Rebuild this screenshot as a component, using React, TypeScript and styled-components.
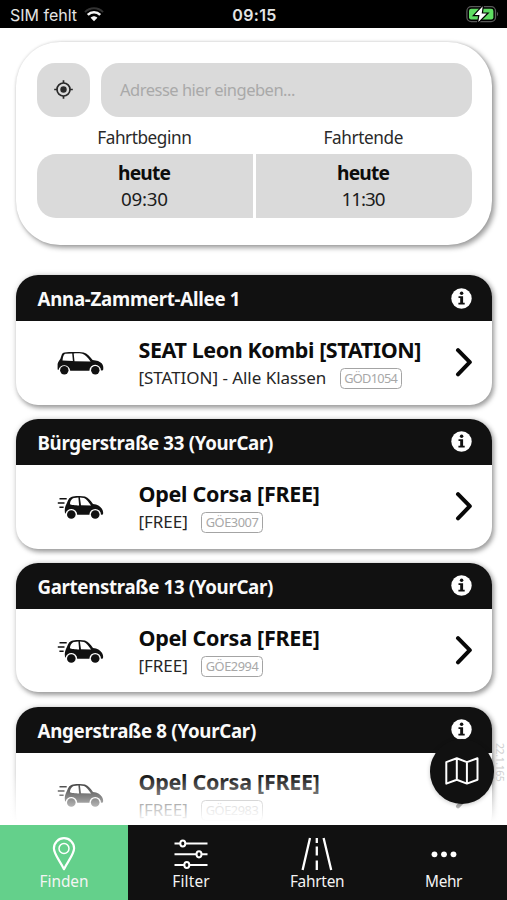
import React from "react";
import styled, { createGlobalStyle } from "styled-components";

const Global = createGlobalStyle`
  * { box-sizing: border-box; }
  html, body { margin: 0; padding: 0; background: #fff; }
  body { font-family: "Noto Sans", "Open Sans", sans-serif; color: #0c0c0c; overflow: hidden; }
  button { font: inherit; color: inherit; border: 0; padding: 0; background: none; }
  svg { display: block; flex: none; }
`;

const Screen = styled.div`
  position: relative;
  width: 507px;
  height: 900px;
  display: flex;
  flex-direction: column;
  overflow: hidden;
  background: #fff;
`;

const StatusBar = styled.header`
  flex: none;
  height: 28px;
  display: grid;
  grid-template-columns: 1fr auto 1fr;
  align-items: center;
  padding: 1px 8px 0 10px;
  background: #000;
  color: #e4e4e4;
  font: 400 16px/26px Inter, sans-serif;
`;
const Carrier = styled.div`
  display: flex;
  align-items: center;
  gap: 7px;
`;
const Clock = styled.div`
  font-weight: 600;
  letter-spacing: 0.35px;
`;
const Power = styled.div`
  display: flex;
  justify-content: flex-end;
`;

const Content = styled.main`
  flex: 1;
  min-height: 0;
  overflow: hidden;
  padding: 14px 15px 0 16px;
`;

const Fit = styled.span<{ $ls?: number }>`
  letter-spacing: ${(p) => p.$ls ?? 0}px;
  margin-right: ${(p) => -(p.$ls ?? 0)}px;
  white-space: nowrap;
`;

const SearchPanel = styled.section`
  height: 203px;
  padding: 21px 20.5px 0;
  border-radius: 44px;
  background: #fff;
  box-shadow: 2.5px 2.5px 5px rgba(0, 0, 0, 0.36), 0 0 3px rgba(0, 0, 0, 0.12);
`;
const AddressRow = styled.div`
  display: flex;
  gap: 11px;
`;
const LocateButton = styled.button`
  width: 53.5px;
  height: 53.5px;
  display: grid;
  place-items: center;
  border-radius: 18px;
  background: #dadada;
`;
const AddressField = styled.div`
  flex: 1;
  height: 53.5px;
  padding-left: 19px;
  border-radius: 18px;
  background: #dadada;
  color: #a9a9a9;
  font-size: 16.5px;
  line-height: 54px;
`;
const Period = styled.div`
  display: grid;
  grid-template-columns: 1fr 1fr;
  column-gap: 3px;
`;
const PeriodLabel = styled.div`
  height: 37px;
  text-align: center;
  font-size: 17.2px;
  line-height: 41px;
  color: #2a2a2a;
`;
const PeriodButton = styled.button<{ $side: "left" | "right" }>`
  height: 64px;
  padding-top: 6px;
  display: flex;
  flex-direction: column;
  align-items: center;
  background: #dadada;
  border-radius: ${(p) => (p.$side === "left" ? "19px 0 0 19px" : "0 19px 19px 0")};
`;
const Day = styled.strong`
  font-size: 19.2px;
  line-height: 26px;
`;
const Time = styled.span`
  font-size: 18.8px;
  line-height: 26px;
  color: #1c1c1c;
`;

const Stations = styled.div`
  margin-top: 30.3px;
  display: flex;
  flex-direction: column;
  gap: 14.5px;
`;
const Card = styled.article`
  flex: none;
  height: 129.4px;
  border-radius: 22px;
  background: #fff;
  box-shadow: 2px 2.5px 5px rgba(0, 0, 0, 0.36), 0 0 6px rgba(0, 0, 0, 0.12);
`;
const CardHead = styled.header`
  height: 45.6px;
  padding: 0 20.5px 0 21.5px;
  display: flex;
  align-items: center;
  justify-content: space-between;
  border-radius: 22px 22px 0 0;
  background: #111;
  color: #fafafa;
  font-size: 18.7px;
  font-weight: 700;
  line-height: 46px;
`;
const Name = styled.span`
  padding-top: 2px;
`;
const CardBody = styled.div`
  height: 83.8px;
  display: grid;
  grid-template-columns: 122.5px 1fr 37.5px;
`;
const CarSlot = styled.div`
  padding: 28px 0 0 40px;
`;
const Vehicle = styled.div`
  padding-top: 14.2px;
`;
const Model = styled.h2`
  margin: 0;
  font-size: 21.5px;
  line-height: 30px;
  font-weight: 700;
`;
const Detail = styled.div`
  display: flex;
  align-items: center;
  gap: 13.5px;
  height: 25px;
  font-size: 17px;
  line-height: 25px;
  color: #262626;
`;
const Plate = styled.span`
  height: 20.5px;
  margin-top: 2px;
  padding: 0 3.5px;
  border: 1.6px solid #a4a4a4;
  border-radius: 4.5px;
  color: #a8a8a8;
  font-size: 12.8px;
  line-height: 18px;
`;
const ArrowSlot = styled.div`
  padding-top: 26.5px;
`;

const Fade = styled.div`
  position: absolute;
  left: 0;
  right: 0;
  bottom: 75.5px;
  height: 52px;
  background: linear-gradient(rgba(255, 255, 255, 0), #fff 94%);
`;
const MapButton = styled.button`
  position: absolute;
  left: 429.5px;
  top: 739px;
  width: 64.5px;
  height: 65px;
  padding-bottom: 2px;
  display: grid;
  place-items: center;
  border-radius: 50%;
  background: #111;
  box-shadow: 0 1px 4px rgba(0, 0, 0, 0.22);
`;
const Version = styled.div`
  position: absolute;
  left: 493px;
  top: 743px;
  writing-mode: vertical-rl;
  font-size: 10.5px;
  line-height: 14px;
  letter-spacing: -0.4px;
  color: #cfcfcf;
`;

const TabBar = styled.nav`
  flex: none;
  height: 75.5px;
  display: grid;
  grid-template-columns: 128px 126px 126.5px 126.5px;
  background: #111;
  color: #f4f4f4;
`;
const Tab = styled.a<{ $active?: boolean }>`
  display: flex;
  flex-direction: column;
  align-items: center;
  padding-top: 12px;
  background: ${(p) => (p.$active ? "#64d08b" : "transparent")};
  font-size: 15.4px;
  line-height: 22px;
`;
const TabIcon = styled.span`
  height: 34px;
`;

const Wifi = () => (
  <svg width="20" height="15" viewBox="0 0 20 15" fill="none">
    <path d="M1 5.1C6-.1 14-.1 19 5.1" stroke="#333" strokeWidth="2" />
    <path d="M3.8 7.9c3.5-3.6 8.9-3.6 12.4 0" stroke="#f5f5f5" strokeWidth="2.6" />
    <path d="M6.6 10.8c2-2 4.8-2 6.8 0L10 14.3z" fill="#f5f5f5" />
  </svg>
);
const Battery = () => (
  <svg width="33" height="19" viewBox="0 0 33 19">
    <rect x=".9" y="1.6" width="28.6" height="15" rx="4.4" fill="#000" stroke="#5a5a5a" strokeWidth="1.3" />
    <rect x="3" y="3.7" width="24.4" height="10.8" rx="2.2" fill="#5fdc62" />
    <path d="M31 7c1.5.6 1.5 3.6 0 4.2z" fill="#5a5a5a" />
    <path d="M16.700 1.300 8.700 10h4.800l-1.200 6.900L20.700 8.600h-5z" fill="#fff" stroke="#000" strokeWidth="2.400" paintOrder="stroke" />
  </svg>
);
const Locate = () => (
  <svg width="19" height="19" viewBox="0 0 19 19" fill="none" stroke="#292929">
    <circle cx="9.5" cy="9.5" r="6.5" strokeWidth="1.7" />
    <circle cx="9.5" cy="9.5" r="3.2" fill="#292929" stroke="none" />
    <path d="M9.5.2v2.9M9.5 15.9v2.9M.2 9.5h2.9M15.900 9.500h2.900" strokeWidth="1.700" />
  </svg>
);
const Info = () => (
  <svg width="21" height="21" viewBox="0 0 21 21">
    <circle cx="10.500" cy="10.500" r="10.200" fill="#fff" />
    <circle cx="10.600" cy="5.200" r="1.750" fill="#111" />
    <path d="M7.500 8.200h4.600v6.600h1.600v1.700H7.400v-1.700H9.200V9.900H7.500z" fill="#111" />
  </svg>
);
const Arrow = () => (
  <svg width="19" height="30" viewBox="0 0 19 30" fill="none">
    <path d="m3 3.200 11.800 12L3 27.300" stroke="#080808" strokeWidth="4" strokeLinecap="round" strokeLinejoin="round" />
  </svg>
);
const StationCar = () => (
  <svg width="50" height="26" viewBox="0 0 50 26">
    <path
      fill="#111"
      fillRule="evenodd"
      d="M1.600 20.500V15C2 12.800 3.400 11.500 4.300 10L5.800 5.600C6.400 4.200 7.200 3.600 8.600 3.500 14 3 22 2.900 27.600 3.600c3.600.9 6.200 4.300 9 7.300 4 .4 7.500 1.300 9.300 3.700 1.300 1.800 1.800 4.200 1.200 6.600L45 21.500a5.800 5.800 0 0 0-11.600.2H14.200a5.900 5.900 0 0 0-11.700-.6zM9.300 4.800C7.600 5.200 6.900 8.200 6.500 11.400L16.900 12.100 16.200 4.400zM17.700 4.400 18.500 12.200 34.600 12.400C32 8.600 29 5.300 26.400 4.700 23.800 4.300 20.600 4.300 17.700 4.400z"
    />
    <circle cx="8.300" cy="21.200" r="4.200" fill="#111" />
    <circle cx="39.300" cy="21.200" r="4.200" fill="#111" />
  </svg>
);
const FreeCar = () => (
  <svg width="50" height="26" viewBox="0 0 50 26">
    <path d="M3.500 5.700h7.200M1.800 10.100h6.700M3.400 14.200h4.200" stroke="#111" strokeWidth="1.500" />
    <path
      fill="#111"
      fillRule="evenodd"
      d="M9 20c-.8-4.500.6-7.500 2-10.300 1.500-4 2.800-5.800 6-6.300C22 2.800 26 2.800 29 3.600c3.500 1.200 5.500 4.300 8 7.300 4.500.6 7 2 8.900 4.900 1.200 2 1.600 3.900 1 5.800L45 21.700a5.800 5.800 0 0 0-11.600 0H21.200a5.900 5.900 0 0 0-11.700-.9zM18 4.900c-2.600.6-4.200 4.100-3.900 6.300.8.800 5.400 1.100 9 1.200L22.400 4.400zM23.900 4.400 25 12.300 35 12.600C32.700 8.800 30.200 5.700 28 4.900z"
    />
    <circle cx="15.300" cy="21.500" r="4.300" fill="#111" />
    <circle cx="39.200" cy="21.500" r="4.300" fill="#111" />
  </svg>
);
const MapIcon = () => (
  <svg width="34" height="28" viewBox="0 0 34 28" fill="none" stroke="#fff" strokeWidth="2" strokeLinejoin="round">
    <path d="M1.300 5.100 11.800 1.300l10.100 3.800 10.600-3.800v21.500l-10.600 3.800-10.100-3.800-10.500 3.800zM11.800 1.300v21.500M21.900 5.100v21.500" />
  </svg>
);
const Pin = () => (
  <svg width="24" height="34" viewBox="0 0 24 34" fill="none" stroke="#fff">
    <path d="M12 32.200C8 24 1.900 17.200 1.900 11.300a10.100 10.100 0 0 1 20.200 0C22.100 17.200 16 24 12 32.200z" strokeWidth="2.200" strokeLinejoin="round" />
    <circle cx="12" cy="11.500" r="5" strokeWidth="1.500" />
  </svg>
);
const Sliders = () => (
  <svg width="34" height="34" viewBox="0 0 34 34" fill="#111" stroke="#fff" strokeWidth="2">
    <path d="M.5 6.500h33M.5 17.300h33M.5 28h33" />
    <ellipse cx="8.800" cy="6.500" rx="2.500" ry="3.100" />
    <ellipse cx="25" cy="17.300" rx="2.500" ry="3.100" />
    <ellipse cx="12.800" cy="28" rx="2.500" ry="3.100" />
  </svg>
);
const Road = () => (
  <svg width="32" height="34" viewBox="0 0 32 34" fill="none" stroke="#fff" strokeWidth="2.300">
    <path d="M9 1 1.600 33M22.600 1 30.200 33M15.800 1v5M15.800 9.500v9M15.800 23.500v9.500" />
  </svg>
);
const Dots = () => (
  <svg width="26" height="34" viewBox="0 0 26 34" fill="#fff">
    <circle cx="3.500" cy="17.300" r="2.900" />
    <circle cx="13" cy="17.300" r="2.900" />
    <circle cx="22.500" cy="17.300" r="2.900" />
  </svg>
);

type Station = {
  name: string;
  nameLs: number;
  model: string;
  modelLs: number;
  kind: string;
  kindLs: number;
  plate: string;
  plateLs: number;
  free: boolean;
};
const corsa = { model: "Opel Corsa [FREE]", modelLs: -0.27, kind: "[FREE]", kindLs: -0.05, free: true };
const stations: Station[] = [
  { name: "Anna-Zammert-Allee 1", nameLs: -0.28, model: "SEAT Leon Kombi [STATION]", modelLs: -0.42, kind: "[STATION] - Alle Klassen", kindLs: -0.04, plate: "GÖD1054", plateLs: -0.72, free: false },
  { name: "Bürgerstraße 33 (YourCar)", nameLs: -0.31, plate: "GÖE3007", plateLs: -0.45, ...corsa },
  { name: "Gartenstraße 13 (YourCar)", nameLs: -0.33, plate: "GÖE2994", plateLs: -0.45, ...corsa },
  { name: "Angerstraße 8 (YourCar)", nameLs: -0.28, plate: "GÖE2983", plateLs: -0.45, ...corsa },
];

const StationCard = ({ s }: { s: Station }) => (
  <Card>
    <CardHead>
      <Name><Fit $ls={s.nameLs}>{s.name}</Fit></Name>
      <Info />
    </CardHead>
    <CardBody>
      <CarSlot>{s.free ? <FreeCar /> : <StationCar />}</CarSlot>
      <Vehicle>
        <Model><Fit $ls={s.modelLs}>{s.model}</Fit></Model>
        <Detail>
          <Fit $ls={s.kindLs}>{s.kind}</Fit>
          <Plate><Fit $ls={s.plateLs}>{s.plate}</Fit></Plate>
        </Detail>
      </Vehicle>
      <ArrowSlot><Arrow /></ArrowSlot>
    </CardBody>
  </Card>
);

export default function App() {
  return (
    <Screen>
      <Global />
      <StatusBar>
        <Carrier>SIM fehlt<Wifi /></Carrier>
        <Clock>09:15</Clock>
        <Power><Battery /></Power>
      </StatusBar>
      <Content>
        <SearchPanel>
          <AddressRow>
            <LocateButton aria-label="Standort"><Locate /></LocateButton>
            <AddressField><Fit $ls={-0.5}>Adresse hier eingeben...</Fit></AddressField>
          </AddressRow>
          <Period>
            <PeriodLabel><Fit $ls={-0.45}>Fahrtbeginn</Fit></PeriodLabel>
            <PeriodLabel><Fit $ls={-0.4}>Fahrtende</Fit></PeriodLabel>
            <PeriodButton $side="left">
              <Day><Fit $ls={-0.8}>heute</Fit></Day>
              <Time><Fit $ls={-0.2}>09:30</Fit></Time>
            </PeriodButton>
            <PeriodButton $side="right">
              <Day><Fit $ls={-0.8}>heute</Fit></Day>
              <Time><Fit $ls={-1.05}>11:30</Fit></Time>
            </PeriodButton>
          </Period>
        </SearchPanel>
        <Stations>
          {stations.map((s) => <StationCard key={s.name} s={s} />)}
        </Stations>
      </Content>
      <TabBar>
        <Tab $active><TabIcon><Pin /></TabIcon><Fit $ls={0}>Finden</Fit></Tab>
        <Tab><TabIcon><Sliders /></TabIcon><Fit $ls={0.15}>Filter</Fit></Tab>
        <Tab><TabIcon><Road /></TabIcon><Fit $ls={-0.25}>Fahrten</Fit></Tab>
        <Tab><TabIcon><Dots /></TabIcon><Fit $ls={-0.4}>Mehr</Fit></Tab>
      </TabBar>
      <Fade />
      <Version>22.1.165</Version>
      <MapButton aria-label="Karte"><MapIcon /></MapButton>
    </Screen>
  );
}
